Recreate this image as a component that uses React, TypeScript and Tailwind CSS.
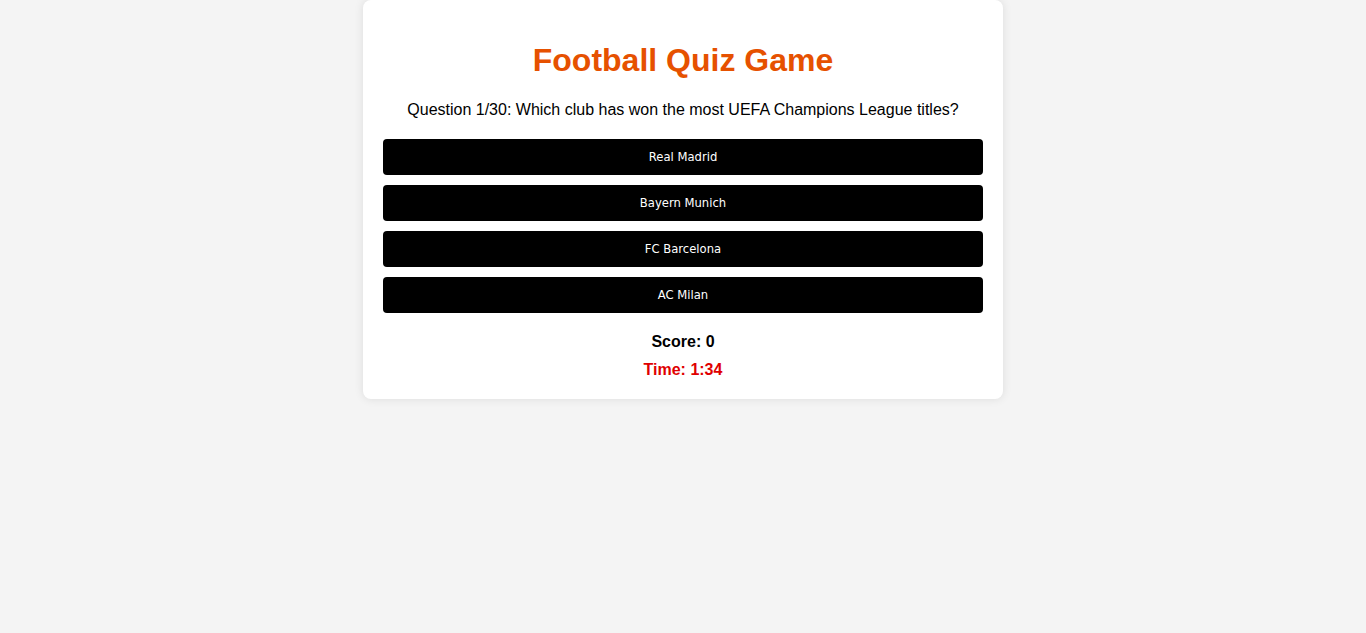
import React from "react";

export default function App() {
  const options = ["Real Madrid", "Bayern Munich", "FC Barcelona", "AC Milan"];
  return (
    <div className="min-h-[633px] w-full bg-[#f4f4f4] font-['Liberation_Sans',Arial,sans-serif]">
      <div className="mx-auto flex w-[640px] flex-col items-center rounded-[8px] bg-white px-5 pb-[20px] pt-[42px] shadow-[0_0_10px_rgba(0,0,0,0.1)]">
        <h1 className="text-[32px] font-bold leading-[37px] text-[#e65100]">Football Quiz Game</h1>
        <p className="mt-[22px] text-[16px] leading-[18px] text-black">
          Question 1/30: Which club has won the most UEFA Champions League titles?
        </p>
        <div className="mt-[20px] flex w-full flex-col gap-[10px]">
          {options.map((o) => (
            <button
              key={o}
              className="h-[36px] w-full rounded-[4px] bg-black pt-[2px] text-[11.6px] text-white font-['DejaVu_Sans',Verdana,sans-serif]"
            >
              {o}
            </button>
          ))}
        </div>
        <div className="mt-[20px] text-[16px] font-bold leading-[18px] text-black">Score: 0</div>
        <div className="mt-[10px] text-[16px] font-bold leading-[18px] text-[#e00000]">Time: 1:34</div>
      </div>
    </div>
  );
}
